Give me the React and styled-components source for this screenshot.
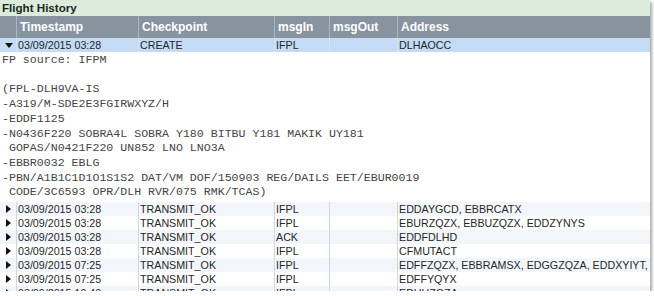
import styled, { createGlobalStyle } from 'styled-components'

const GlobalStyle = createGlobalStyle`
  body {
    margin: 0;
    background: #fff;
    font-family: 'Liberation Sans', Arial, sans-serif;
  }
`

const COLS = '16px 122px 136px 55px 68px 1fr'

const Panel = styled.div`
  width: 650px;
  height: 291px;
  overflow: hidden;
  background: #fff;
  box-shadow: 2px 2px 3px rgba(0, 0, 0, 0.35);
  display: flex;
  flex-direction: column;
`

const TitleBar = styled.div`
  height: 16px;
  line-height: 16px;
  padding-left: 2px;
  background: #dcebdc;
  color: #1a281c;
  font-size: 11.6px;
  font-weight: bold;
  flex-shrink: 0;
`

const HeaderRow = styled.div`
  display: grid;
  grid-template-columns: ${COLS};
  height: 22px;
  background: #87939f;
  flex-shrink: 0;
`

const HeaderCell = styled.div`
  color: #fff;
  font-size: 12px;
  font-weight: bold;
  line-height: 22px;
  padding-left: 3px;
  border-left: ${(p) => (p.$first ? 'none' : '1px solid #aab7c4')};
  white-space: nowrap;
  overflow: hidden;
`

const Row = styled.div`
  display: grid;
  grid-template-columns: ${COLS};
  height: 14px;
  flex-shrink: 0;
  background: ${(p) => (p.$selected ? '#c4dbf6' : p.$alt ? '#f2f6fb' : '#fff')};
`

const Cell = styled.div`
  font-size: 10.7px;
  line-height: 14px;
  color: #262626;
  padding-left: 1px;
  white-space: nowrap;
  overflow: hidden;
  border-left: ${(p) =>
    p.$first ? 'none' : p.$selected ? '1px solid #d3e3f7' : '1px solid #c9d8ea'};
  display: flex;
  align-items: center;
`

const Expander = styled.div`
  display: flex;
  align-items: center;
  justify-content: center;
  padding-left: 1px;
`

const DownArrow = styled.span`
  width: 0;
  height: 0;
  border-left: 4px solid transparent;
  border-right: 4px solid transparent;
  border-top: 5px solid #111;
`

const RightArrow = styled.span`
  width: 0;
  height: 0;
  border-top: 4px solid transparent;
  border-bottom: 4px solid transparent;
  border-left: 5px solid #111;
`

const Detail = styled.pre`
  margin: 0;
  padding: 1px 0 2px 2px;
  font-family: 'Liberation Mono', 'Courier New', monospace;
  font-size: 11.6px;
  line-height: 14.7px;
  color: #444;
  flex-shrink: 0;
`

const columns = ['Timestamp', 'Checkpoint', 'msgIn', 'msgOut', 'Address']

const detailText = `FP source: IFPM

(FPL-DLH9VA-IS
-A319/M-SDE2E3FGIRWXYZ/H
-EDDF1125
-N0436F220 SOBRA4L SOBRA Y180 BITBU Y181 MAKIK UY181
 GOPAS/N0421F220 UN852 LNO LNO3A
-EBBR0032 EBLG
-PBN/A1B1C1D1O1S1S2 DAT/VM DOF/150903 REG/DAILS EET/EBUR0019
 CODE/3C6593 OPR/DLH RVR/075 RMK/TCAS)`

const rows = [
  ['03/09/2015 03:28', 'TRANSMIT_OK', 'IFPL', '', 'EDDAYGCD, EBBRCATX'],
  ['03/09/2015 03:28', 'TRANSMIT_OK', 'IFPL', '', 'EBURZQZX, EBBUZQZX, EDDZYNYS'],
  ['03/09/2015 03:28', 'TRANSMIT_OK', 'ACK', '', 'EDDFDLHD'],
  ['03/09/2015 03:28', 'TRANSMIT_OK', 'IFPL', '', 'CFMUTACT'],
  [
    '03/09/2015 07:25',
    'TRANSMIT_OK',
    'IFPL',
    '',
    'EDFFZQZX, EBBRAMSX, EDGGZQZA, EDDXYIYT, EDDUZQZA',
  ],
  ['03/09/2015 07:25', 'TRANSMIT_OK', 'IFPL', '', 'EDFFYQYX'],
  ['03/09/2015 10:40', 'TRANSMIT_OK', 'IFPL', '', 'EDUUZQZA'],
]

const DataRow = ({ values, selected, alt, open }) => (
  <Row $selected={selected} $alt={alt}>
    <Expander>{open ? <DownArrow /> : <RightArrow />}</Expander>
    {values.map((v, i) => (
      <Cell key={i} $selected={selected}>
        {v}
      </Cell>
    ))}
  </Row>
)

export default function App() {
  return (
    <>
      <GlobalStyle />
      <Panel>
        <TitleBar>Flight History</TitleBar>
        <HeaderRow>
          <HeaderCell $first />
          {columns.map((c) => (
            <HeaderCell key={c}>{c}</HeaderCell>
          ))}
        </HeaderRow>
        <DataRow
          selected
          open
          values={['03/09/2015 03:28', 'CREATE', 'IFPL', '', 'DLHAOCC']}
        />
        <Detail>{detailText}</Detail>
        {rows.map((r, i) => (
          <DataRow key={i} values={r} alt={i % 2 === 0} />
        ))}
      </Panel>
    </>
  )
}
